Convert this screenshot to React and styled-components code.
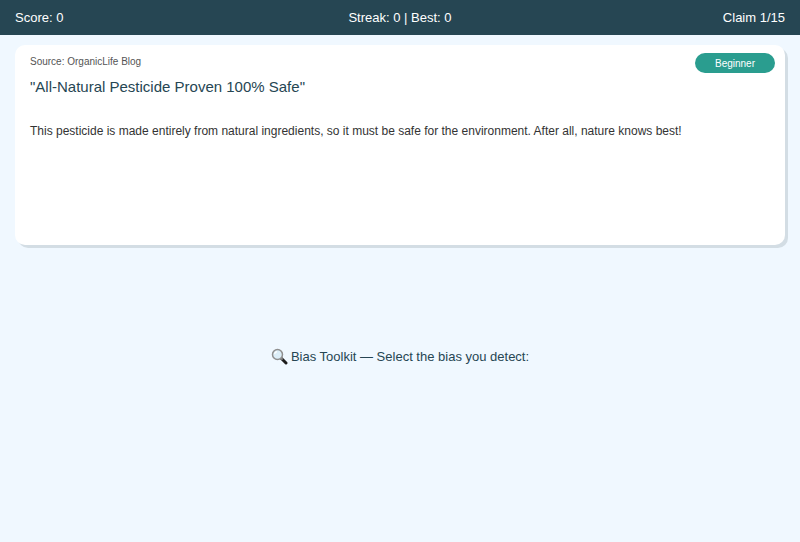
import styled, { createGlobalStyle } from "styled-components";

const GlobalStyle = createGlobalStyle`
  html, body {
    margin: 0;
    padding: 0;
    background: #f0f8ff;
  }
  body {
    font-family: "Liberation Sans", Arial, sans-serif;
  }
`;

const Page = styled.div`
  width: 800px;
  height: 542px;
  overflow: hidden;
  background: #f0f8ff;
`;

const TopBar = styled.header`
  height: 35px;
  padding: 0 15px;
  box-sizing: border-box;
  display: grid;
  grid-template-columns: 1fr auto 1fr;
  align-items: center;
  background: #264653;
  color: #fff;
  font-size: 13px;
`;

const Stat = styled.div`
  text-align: ${(p) => p.$align || "left"};
`;

const Main = styled.main`
  padding: 10px 15px 0;
`;

const Card = styled.section`
  height: 200px;
  box-sizing: border-box;
  padding: 8px 10px 10px 15px;
  background: #fff;
  border-radius: 10px;
  box-shadow: 3px 3px 0 #d3dde4;
`;

const CardHead = styled.div`
  display: flex;
  justify-content: space-between;
  align-items: flex-start;
`;

const Source = styled.div`
  font-size: 10px;
  line-height: 12px;
  color: #555;
  margin-top: 3px;
`;

const Badge = styled.span`
  width: 80px;
  height: 20px;
  border-radius: 10px;
  background: #2a9d8f;
  color: #fff;
  font-size: 10px;
  display: flex;
  align-items: center;
  justify-content: center;
`;

const Title = styled.h2`
  margin: 5px 0 0;
  font-size: 15px;
  line-height: 17px;
  font-weight: 400;
  color: #264653;
`;

const Body = styled.p`
  margin: 29px 0 0;
  font-size: 12px;
  line-height: 14px;
  color: #333;
`;

const Toolkit = styled.div`
  margin-top: 103px;
  display: flex;
  align-items: center;
  justify-content: center;
  gap: 3px;
  font-size: 13px;
  line-height: 15px;
  color: #264653;
`;

const MagnifierIcon = () => (
  <svg width="17" height="17" viewBox="0 0 17 17" aria-hidden="true">
    <path d="M10.5 10.5 L15 15" stroke="#1c1c1c" strokeWidth="3" strokeLinecap="round" />
    <path d="M10 10 L11.6 11.6" stroke="#8a8a8a" strokeWidth="2" />
    <circle cx="6.5" cy="6.5" r="5" fill="#dceef8" stroke="#8f8f8f" strokeWidth="1.5" />
    <path d="M3.6 6 A3 3 0 0 1 6 3.6" fill="none" stroke="#fff" strokeWidth="1.2" />
  </svg>
);

const App = () => {
  return (
    <Page>
      <GlobalStyle />
      <TopBar>
        <Stat>Score: 0</Stat>
        <Stat $align="center">Streak: 0 | Best: 0</Stat>
        <Stat $align="right">Claim 1/15</Stat>
      </TopBar>
      <Main>
        <Card>
          <CardHead>
            <Source>Source: OrganicLife Blog</Source>
            <Badge>Beginner</Badge>
          </CardHead>
          <Title>"All-Natural Pesticide Proven 100% Safe"</Title>
          <Body>
            This pesticide is made entirely from natural ingredients, so it must be safe for the environment. After all, nature knows best!
          </Body>
        </Card>
        <Toolkit>
          <MagnifierIcon />
          <span>Bias Toolkit — Select the bias you detect:</span>
        </Toolkit>
      </Main>
    </Page>
  );
};

export default App;
